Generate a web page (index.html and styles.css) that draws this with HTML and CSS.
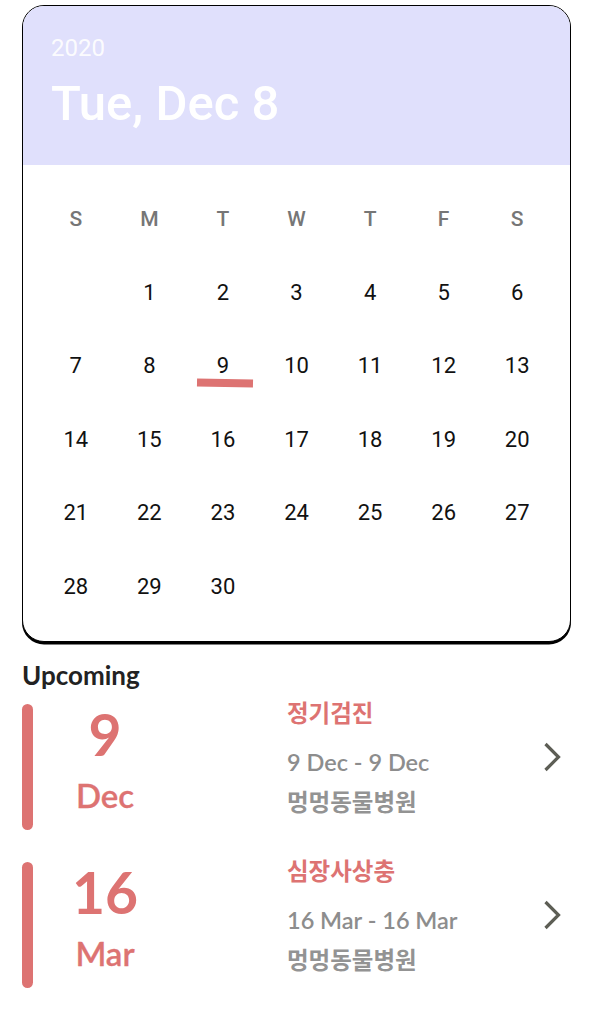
FILE: index.html
```html
<!DOCTYPE html>
<html lang="ko">
<head>
<meta charset="utf-8">
<link rel="stylesheet" href="styles.css">
</head>
<body>
<div class="page">
  <div class="card">
    <div class="card-head">
      <div class="year">2020</div>
      <div class="today">Tue, Dec 8</div>
    </div>
    <div class="grid">
      <div class="wd">S</div><div class="wd">M</div><div class="wd">T</div><div class="wd">W</div><div class="wd">T</div><div class="wd">F</div><div class="wd">S</div>
      <div class="d"></div><div class="d">1</div><div class="d">2</div><div class="d">3</div><div class="d">4</div><div class="d">5</div><div class="d">6</div>
      <div class="d">7</div><div class="d">8</div><div class="d mark">9</div><div class="d">10</div><div class="d">11</div><div class="d">12</div><div class="d">13</div>
      <div class="d">14</div><div class="d">15</div><div class="d">16</div><div class="d">17</div><div class="d">18</div><div class="d">19</div><div class="d">20</div>
      <div class="d">21</div><div class="d">22</div><div class="d">23</div><div class="d">24</div><div class="d">25</div><div class="d">26</div><div class="d">27</div>
      <div class="d">28</div><div class="d">29</div><div class="d">30</div><div class="d"></div><div class="d"></div><div class="d"></div><div class="d"></div>
    </div>
  </div>

  <h2 class="upcoming">Upcoming</h2>

  <div class="item">
    <div class="bar"></div>
    <div class="date">
      <div class="num">9</div>
      <div class="mon">Dec</div>
    </div>
    <div class="info">
      <div class="title">정기검진</div>
      <div class="range">9 Dec - 9 Dec</div>
      <div class="place">멍멍동물병원</div>
    </div>
    <svg class="chev" width="18" height="30" viewBox="0 0 18 30"><polyline points="2.5,2 15.5,15 2.5,28" fill="none" stroke="#5d5e55" stroke-width="3.2"/></svg>
  </div>

  <div class="item">
    <div class="bar"></div>
    <div class="date">
      <div class="num">16</div>
      <div class="mon">Mar</div>
    </div>
    <div class="info">
      <div class="title">심장사상충</div>
      <div class="range">16 Mar - 16 Mar</div>
      <div class="place">멍멍동물병원</div>
    </div>
    <svg class="chev" width="18" height="30" viewBox="0 0 18 30"><polyline points="2.5,2 15.5,15 2.5,28" fill="none" stroke="#5d5e55" stroke-width="3.2"/></svg>
  </div>
</div>
</body>
</html>
```

FILE: styles.css
```css
* { box-sizing: border-box; }
html, body { margin: 0; padding: 0; background: #fff; }
body { width: 590px; height: 1020px; overflow: hidden; font-family: Lato, "Noto Sans CJK KR", sans-serif; }

.page { padding: 5px 19px 0 22px; }

.card {
  border: 1.5px solid #000;
  border-radius: 22px;
  overflow: hidden;
  box-shadow: 0 2.5px 0 #000;
  background: #fff;
}

.card-head {
  background: #e0e0fc;
  padding: 28px 28px 33px;
  font-family: Roboto, sans-serif;
  color: #fff;
}
.year { font-size: 24px; line-height: 28px; opacity: 0.9; }
.today { font-size: 49px; line-height: 56px; font-weight: 500; margin-top: 14px; }

.grid {
  display: grid;
  grid-template-columns: repeat(7, 1fr);
  grid-auto-rows: 73.5px;
  padding: 17px 16px 18px;
  font-family: Roboto, sans-serif;
}
.wd, .d { display: flex; align-items: center; justify-content: center; }
.wd { color: #767676; font-size: 21px; font-weight: 500; }
.d { color: #111; font-size: 22px; position: relative; }
.mark::after {
  content: "";
  position: absolute;
  left: 50%;
  top: 50%;
  width: 56px;
  height: 8px;
  margin-left: -26px;
  margin-top: 13px;
  background: #dd7372;
  transform: rotate(1deg);
}

.upcoming {
  margin: 18px 0 14px;
  font-size: 26px;
  line-height: 30px;
  font-weight: 700;
  color: #222;
}

.item { display: flex; align-items: flex-start; height: 126px; margin-bottom: 32px; }
.bar { width: 11px; height: 126px; border-radius: 6px; background: #dd7372; flex: none; }
.date { width: 144px; flex: none; text-align: center; color: #dd7372; }
.num { font-size: 57px; line-height: 56px; font-weight: 700; margin-top: 2px; }
.mon { font-size: 33px; line-height: 40px; font-weight: 600; margin-top: 13px; -webkit-text-stroke: 0.3px #dd7372; }

.info { flex: 1; margin-left: 110px; margin-top: -2px; }
.title { color: #dd7372; font-size: 23.5px; line-height: 22px; font-weight: 700; }
.range { color: #8d8d8d; font-size: 23.5px; line-height: 30px; font-weight: 600; margin-top: 23px; }
.place { color: #939393; font-size: 23.5px; line-height: 30px; font-weight: 700; margin-top: 10px; }

.chev { flex: none; margin-top: 38px; margin-right: 10px; }
```
